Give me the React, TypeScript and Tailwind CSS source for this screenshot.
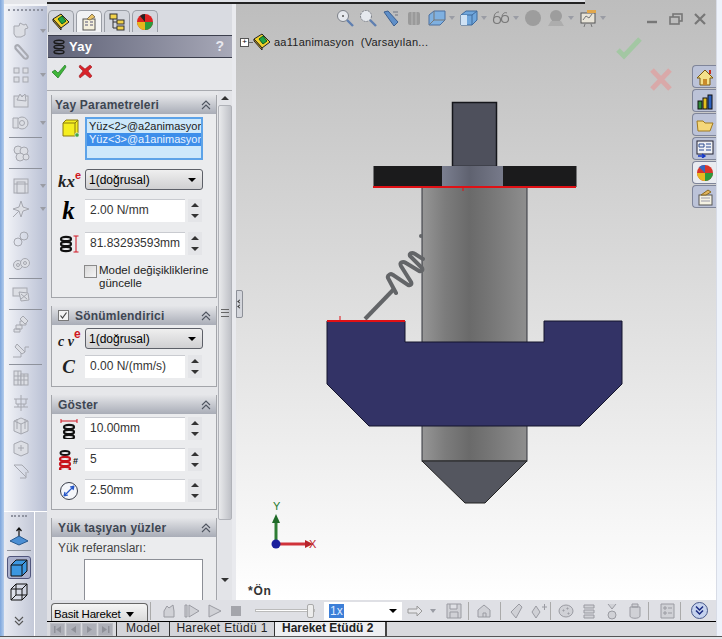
import type { ReactNode } from 'react'

const FONT = "font-['Liberation_Sans',Arial,sans-serif]"

function Ico({ w = 20, h = 20, children }: { w?: number; h?: number; children: ReactNode }) {
  return (
    <svg width={w} height={h} viewBox={`0 0 ${w} ${h}`} className="block shrink-0">
      {children}
    </svg>
  )
}

// Disabled command icons of the left toolbar, all the same washed-out grey
function GreyIcon({ kind }: { kind: number }) {
  const s = { fill: '#dcdee4', stroke: '#a6a8b0', strokeWidth: 1 }
  const shapes: ReactNode[] = [
    <path {...s} d="M3 5h5l1-3 4 2 2-1 2 4-3 1v6l-4 2H5l-2-3z" />,
    <path fill="none" stroke="#a8aab2" strokeWidth="2" d="M4 6l9 10c3 2 5-1 3-3L8 4C6 2 3 4 5 7l8 9" />,
    <g {...s}><rect x="3" y="3" width="5" height="5" /><rect x="12" y="3" width="5" height="5" /><rect x="3" y="12" width="5" height="5" /><rect x="12" y="12" width="5" height="5" /></g>,
    <g {...s}><rect x="3" y="6" width="14" height="11" /><path d="M6 10l3-6 2 3 3-3 1 7z" /></g>,
    <g {...s}><circle cx="11" cy="10" r="6" /><circle cx="11" cy="10" r="2.5" /><path d="M2 5h5v10H2z" /></g>,
    <g {...s}><circle cx="7" cy="7" r="4" /><circle cx="13" cy="8" r="4" /><circle cx="9" cy="14" r="4" /><circle cx="15" cy="14" r="3" /></g>,
    <g {...s}><rect x="3" y="3" width="14" height="14" /><rect x="6" y="6" width="8" height="11" /><path d="M3 8h14" /></g>,
    <g {...s}><path d="M10 2l2 6 6 2-6 2-2 6-2-6-6-2 6-2z" /><path d="M2 18l6-6" /></g>,
    <g {...s} fill="none"><circle cx="7" cy="13" r="4" /><circle cx="13" cy="7" r="4" /><path d="M10 10l-1 1" /></g>,
    <g {...s}><circle cx="7" cy="12" r="4.5" /><circle cx="14" cy="10" r="4.5" /><circle cx="7" cy="12" r="1.5" /><circle cx="14" cy="10" r="1.5" /></g>,
    <g {...s}><rect x="2" y="4" width="14" height="8" /><path d="M8 8l9 1 1 7-8 1z" /><path d="M10 10l6 5M16 10l-6 5" /></g>,
    <g {...s}><path d="M3 15h6v3H3zM5 11h6v4H5zM9 7h6v4H9z" /><path d="M12 2l5 5-3 3-5-5z" /></g>,
    <g {...s}><path d="M2 17h8v-5h4V7h4" fill="none" /><path d="M6 4l8 8-3 2-7-7z" /></g>,
    <g {...s}><rect x="3" y="3" width="7" height="14" /><rect x="10" y="6" width="7" height="11" /><path d="M3 8h14M3 12h14M7 3v14M13 6v11" /></g>,
    <g {...s} fill="none"><path d="M10 2v16M3 6h14M5 6v5h10V6M3 14h14" /><path d="M7 11v3M13 11v3" /></g>,
    <g {...s}><path d="M3 5l7-3 7 3v10l-7 3-7-3z" /><path d="M10 8v10M3 5l7 3 7-3M6 3v10M14 3v10" /></g>,
    <g {...s}><path d="M3 6l7-3 7 3v9l-7 3-7-3z" /><path d="M7 10h6M10 7v6" /></g>,
    <g {...s} fill="none"><path d="M3 4h8l6 6v2M3 4l12 12M15 11v6h-6" /></g>,
  ]
  return <Ico>{shapes[kind]}</Ico>
}

// Tiny triangle shown after a command with a flyout
function Drop() {
  return <span className="block w-0 h-0 border-x-[3.5px] border-x-transparent border-t-[4px] border-t-[#9a9ca4]" />
}

function ToolRow({ kind, drop, cls }: { kind: number; drop?: boolean; cls: string }) {
  return (
    <div className={`flex items-center pl-[7px] gap-[9px] ${cls}`}>
      <GreyIcon kind={kind} />
      {drop && <Drop />}
    </div>
  )
}

function Sep({ cls = '' }: { cls?: string }) {
  return <div className={`h-px bg-[#8e929c] mx-[5px] ${cls}`} />
}

// Dotted grip on top of a toolbar
function Grip({ cls = '' }: { cls?: string }) {
  return <div className={`h-[2px] mx-[4px] border-t-2 border-dotted border-[#8f93a0] ${cls}`} />
}

function CollapseChevrons() {
  return (
    <svg width="12" height="12" viewBox="0 0 12 12" className="block">
      <path d="M2 6l4-4 4 4M2 10l4-4 4 4" fill="none" stroke="#4f5560" strokeWidth="1.1" />
    </svg>
  )
}

function Spinner() {
  return (
    <div className="w-[14px] h-full flex flex-col items-center justify-center gap-[7px] bg-[#e4e5e8]">
      <span className="block w-0 h-0 border-x-[4px] border-x-transparent border-b-[4px] border-b-[#333]" />
      <span className="block w-0 h-0 border-x-[4px] border-x-transparent border-t-[4px] border-t-[#333]" />
    </div>
  )
}

function NumField({ icon, value, cls = '' }: { icon: ReactNode; value: string; cls?: string }) {
  return (
    <div className={`flex h-[23px] ${cls}`}>
      <div className="w-[33px] flex items-center justify-center">{icon}</div>
      <div className="w-[100px] h-[23px] bg-white border-t border-[#c9cbd0] pl-[5px] text-[12px] leading-[21px] text-[#333]">{value}</div>
      <div className="ml-[3px] h-full"><Spinner /></div>
    </div>
  )
}

function Combo({ cls = '' }: { cls?: string }) {
  return (
    <div className={`w-[118px] h-[21px] rounded-[3px] border border-[#5d6068] bg-gradient-to-b from-[#efefef] to-[#d0d0d2] flex items-center justify-between pl-[3px] pr-[6px] text-[12px] text-black ${cls}`}>
      <span>1(doğrusal)</span>
      <span className="block w-0 h-0 border-x-[4px] border-x-transparent border-t-[4px] border-t-black" />
    </div>
  )
}

function Group({ title, check, titleCls = 'pl-[6px]', cls = '', children }: { title: string; check?: boolean; titleCls?: string; cls?: string; children: ReactNode }) {
  return (
    <section className={`shrink-0 border border-[#a3a5aa] border-t-0 bg-[#ebecee] w-[166px] ${cls}`}>
      <div className={`h-[19px] bg-gradient-to-b from-[#e5e6e9] to-[#a9adb7] flex items-center justify-between pr-[4px] ${titleCls}`}>
        <div className="flex items-center">
          {check && (
            <span className="w-[11px] h-[11px] border border-[#777] bg-[#f3f3f3] mr-[6px] flex items-center justify-center">
              <svg width="9" height="9" viewBox="0 0 9 9"><path d="M1.5 4.5l2 2.5 4-5.5" fill="none" stroke="#444" strokeWidth="1.2" /></svg>
            </span>
          )}
          <span className="text-[12px] font-bold text-[#3e4652] tracking-[0.2px]">{title}</span>
        </div>
        <CollapseChevrons />
      </div>
      {children}
    </section>
  )
}

const SpringPlain = ({ red }: { red?: boolean }) => (
  <g fill="none" stroke={red ? '#c8141c' : '#111'} strokeWidth="2.2">
    <ellipse cx="8" cy="4" rx="5" ry="2.2" />
    <ellipse cx="8" cy="9" rx="5" ry="2.2" />
    <ellipse cx="8" cy="14" rx="5" ry="2.2" />
  </g>
)

function ManagerTab({ active, children }: { active?: boolean; children: ReactNode }) {
  return (
    <div className={`w-[26px] h-[22px] rounded-t-[5px] border border-b-0 border-[#9a9ea6] flex items-center justify-center ${active ? 'bg-[#f2f3f5]' : 'bg-[#d4d7de]'}`}>
      {children}
    </div>
  )
}

const PartCube = () => (
  <Ico w={18} h={18}>
    <path d="M1 6l8-5 8 8-8 6z" fill="#f2d02c" stroke="#222" />
    <path d="M6 6l4-3 4 5-4 3z" fill="#1fa345" stroke="#0b5a22" />
    <path d="M1 6l8 9v2L1 8z" fill="#e0b020" stroke="#222" />
  </Ico>
)

function PropertyPanel() {
  return (
    <div className={`w-[185px] h-[600px] shrink-0 bg-[#e6e7ea] flex flex-col overflow-hidden ${FONT}`}>
      <div className="h-[35px] shrink-0 pt-[10px] pl-[1px] flex gap-[2px] bg-[#d9dbe1]">
        <ManagerTab><PartCube /></ManagerTab>
        <ManagerTab active>
          <Ico w={18} h={18}><rect x="3" y="6" width="12" height="11" fill="#f5f0dc" stroke="#555" /><path d="M5 9h3M10 9h3M5 12h3M10 12h3" stroke="#557" /><path d="M7 6l5-5 3 3-5 3z" fill="#e9c46a" stroke="#875" /></Ico>
        </ManagerTab>
        <ManagerTab>
          <Ico w={18} h={18}><rect x="2" y="1" width="7" height="5" fill="#f2d24a" stroke="#333" /><rect x="9" y="7" width="7" height="4" fill="#f2d24a" stroke="#333" /><rect x="9" y="13" width="7" height="4" fill="#f2d24a" stroke="#333" /><path d="M5 6v9h4M5 9h4" fill="none" stroke="#333" /></Ico>
        </ManagerTab>
        <ManagerTab>
          <Ico w={18} h={18}><circle cx="9" cy="9" r="8" fill="#d22" /><path d="M9 9L1 9a8 8 0 0 0 8 8z" fill="#e5b51c" /><path d="M9 9v8a8 8 0 0 0 8-8z" fill="#2c9a3c" /><path d="M9 9L4 3a8 8 0 0 1 5-2z" fill="#222" /></Ico>
        </ManagerTab>
      </div>
      <div className="h-[23px] shrink-0 ml-[1px] border-y border-[#3c3f4d] bg-gradient-to-r from-[#5f6277] to-[#a8a9b8] flex items-center justify-between pl-[4px] pr-[8px]">
        <div className="flex items-center gap-[3px]">
          <Ico w={14} h={18}>
            <g fill="none" stroke="#1a1a1a" strokeWidth="1.4"><ellipse cx="7" cy="4" rx="5" ry="1.8" /><ellipse cx="7" cy="9" rx="5" ry="1.8" /><ellipse cx="7" cy="14" rx="5" ry="1.8" /></g>
          </Ico>
          <span className="text-[13px] font-bold text-white tracking-[0.3px]">Yay</span>
        </div>
        <span className="text-[14px] font-bold text-[#e8e8ee]">?</span>
      </div>
      <div className="h-[33px] shrink-0 flex items-center gap-[11px] pl-[4px] pb-[6px] border-b border-[#a9abb0]">
        <Ico w={16} h={15}><path d="M1 8l3-2 3 3 7-8 1 2-8 11z" fill="#3fb53a" stroke="#1e7a22" strokeWidth="0.7" /></Ico>
        <Ico w={15} h={15}><path d="M2 1l5 4 5-4 2 2-4 4 4 5-2 2-5-4-5 4-1-2 4-5-4-4z" fill="#d8232a" stroke="#8c1016" strokeWidth="0.5" /></Ico>
      </div>
      <div className="flex flex-1 min-h-0 pt-[4px] overflow-hidden">
        <div className="pl-[4px] w-[171px] shrink-0 flex flex-col gap-[8px]">
          <Group title="Yay Parametreleri" titleCls="pl-[3px]" cls="h-[203px]">
            <div className="flex mt-[3px]">
              <div className="w-[33px] pl-[9px] pt-[1px]">
                <Ico w={20} h={20}>
                  <path d="M2 5l3-3h12v13l-3 3H2z" fill="#f5ee20" stroke="#8a7a10" />
                  <path d="M2 5h12v13M14 5l3-3" fill="none" stroke="#8a7a10" />
                  <circle cx="16" cy="17" r="2.2" fill="#45a545" stroke="#fff" strokeWidth="0.6" />
                </Ico>
              </div>
              <div className="w-[118px] h-[43px] border-2 border-[#5da3e8] bg-[#cde8fb] pt-[1px] text-[11px] leading-[13px] overflow-hidden whitespace-nowrap text-[#1c1c1c]">
                <div className="pl-[2px]">Yüz&lt;2&gt;@a2animasyon</div>
                <div className="pl-[2px] bg-[#3d8eea] text-[#e8f2ff]">Yüz&lt;3&gt;@a1animasyon</div>
              </div>
            </div>
            <div className="flex mt-[9px] items-center">
              <div className="w-[33px] pl-[6px] font-['Liberation_Serif',serif] italic font-bold text-[17px] leading-none text-[#222] whitespace-nowrap">
                kx<span className="not-italic text-[11px] text-[#d01520] font-['Liberation_Sans',sans-serif] align-[8px]">e</span>
              </div>
              <Combo />
            </div>
            <NumField cls="mt-[9px]" value="2.00 N/mm" icon={<span className="font-['Liberation_Serif',serif] italic font-bold text-[25px] leading-none text-black">k</span>} />
            <NumField
              cls="mt-[10px]"
              value="81.83293593mm"
              icon={
                <Ico w={22} h={18}>
                  <SpringPlain />
                  <path d="M18 1v16M15.5 1h5M15.5 17h5" stroke="#d01520" fill="none" />
                </Ico>
              }
            />
            <div className="flex mt-[9px] pl-[32px] text-[11.5px] leading-[13px] text-[#222]">
              <span className="w-[13px] h-[13px] border border-[#8a8a8a] bg-gradient-to-br from-[#d8d8d8] to-[#f5f5f5] shrink-0 mt-[1px]" />
              <span className="ml-[2px] w-[115px]">Model değişikliklerine güncelle</span>
            </div>
          </Group>
          <Group title="Sönümlendirici" check cls="h-[81px]">
            <div className="flex mt-[3px] items-center">
              <div className="w-[33px] pl-[6px] font-['Liberation_Serif',serif] italic font-bold text-[14px] leading-none text-[#222] whitespace-nowrap">
                c v<span className="not-italic text-[12px] text-[#d01520] font-['Liberation_Sans',sans-serif] align-[8px]">e</span>
              </div>
              <Combo />
            </div>
            <NumField cls="mt-[6px]" value="0.00 N/(mm/s)" icon={<span className="font-['Liberation_Serif',serif] italic font-bold text-[19px] leading-none text-[#222]">C</span>} />
          </Group>
          <Group title="Göster" cls="h-[115px]">
            <NumField
              cls="mt-[3px]"
              value="10.00mm"
              icon={
                <Ico w={18} h={20}>
                  <path d="M1 2h16M1 0v4M17 0v4" stroke="#d01520" fill="none" />
                  <g transform="translate(1 4)"><SpringPlain /></g>
                </Ico>
              }
            />
            <NumField
              cls="mt-[8px]"
              value="5"
              icon={
                <Ico w={22} h={20}>
                  <ellipse cx="7" cy="3" rx="4.5" ry="2" fill="none" stroke="#111" strokeWidth="2" />
                  <g transform="translate(-1 5)"><SpringPlain red /></g>
                  <text x="15" y="14" fontSize="9" fontWeight="700" fontFamily="Liberation Sans" fill="#111">#</text>
                </Ico>
              }
            />
            <NumField
              cls="mt-[8px]"
              value="2.50mm"
              icon={
                <Ico w={20} h={20}>
                  <circle cx="10" cy="10" r="8.5" fill="#f4f6fa" stroke="#3a3f4a" />
                  <path d="M5 15L15 5M5 15l1-4M5 15l4-1M15 5l-4 1M15 5l-1 4" stroke="#2456c8" fill="none" strokeWidth="1.2" />
                </Ico>
              }
            />
          </Group>
          <Group title="Yük taşıyan yüzler" cls="h-[90px] border-b-0">
            <div className="pl-[6px] mt-[4px] text-[12px] text-[#444] leading-[14px]">Yük referansları:</div>
            <div className="ml-[32px] mt-[4px] w-[119px] h-[44px] bg-white border border-[#8c8f96]" />
          </Group>
        </div>
        <div className="w-[14px] shrink-0 flex flex-col items-center bg-[#e3e4e8] -mt-[4px] pt-[4px]">
          <span className="mt-[1px] block w-0 h-0 border-x-[4px] border-x-transparent border-b-[4px] border-b-[#333]" />
          <div className="mt-[5px] w-[14px] h-[415px] bg-gradient-to-r from-[#e9eaec] to-[#bfc1c7] border border-[#b0b2b8] rounded-[2px] flex items-center justify-center">
            <div className="w-[8px] h-[8px] border-y border-[#666] flex items-center"><div className="w-full h-px bg-[#666]" /></div>
          </div>
          <span className="mt-[58px] block w-0 h-0 border-x-[4px] border-x-transparent border-t-[4px] border-t-[#333]" />
        </div>
      </div>
    </div>
  )
}

function LeftToolbar() {
  return (
    <div className="w-[47px] h-[636px] shrink-0 flex">
      <div className="w-[4px] bg-gradient-to-r from-[#7ea6dc] to-[#b5cdec]" />
      <div className="w-[43px] flex flex-col">
        <div className="h-[507px] shrink-0 bg-gradient-to-r from-[#f3f4f8] to-[#b9c0d4] border-t-2 border-[#f4f5f8] mt-[4px] pt-[3px] flex flex-col overflow-hidden">
          <Grip />
          <ToolRow kind={0} drop cls="h-[24px] mt-[8px]" />
          <ToolRow kind={1} cls="h-[18px]" />
          <ToolRow kind={2} drop cls="h-[28px]" />
          <ToolRow kind={3} cls="h-[22px]" />
          <ToolRow kind={4} drop cls="h-[24px]" />
          <Sep cls="mt-[2px]" />
          <ToolRow kind={5} cls="h-[30px]" />
          <Sep />
          <ToolRow kind={6} drop cls="h-[26px] mt-[4px]" />
          <ToolRow kind={7} drop cls="h-[20px]" />
          <ToolRow kind={8} cls="h-[26px] mt-[7px]" />
          <ToolRow kind={9} cls="h-[22px]" />
          <Sep cls="mt-[4px]" />
          <ToolRow kind={10} cls="h-[30px]" />
          <Sep />
          <ToolRow kind={11} cls="h-[27px]" />
          <ToolRow kind={12} cls="h-[26px]" />
          <Sep cls="mt-[1px]" />
          <ToolRow kind={13} cls="h-[26px]" />
          <ToolRow kind={14} cls="h-[24px]" />
          <ToolRow kind={15} cls="h-[22px]" />
          <ToolRow kind={16} cls="h-[22px]" />
          <ToolRow kind={17} cls="h-[24px]" />
        </div>
        <div className="flex-1 border-t border-white flex">
          <div className="w-[31px] bg-gradient-to-r from-[#e8eaf1] to-[#c4c9d8] border-r border-white flex flex-col items-center pt-[3px]">
            <div className="w-[24px]"><Grip cls="mx-0" /></div>
            <div className="mt-[9px]">
              <Ico w={22} h={22}>
                <path d="M11 2v13M8.500 5L11 2l2.500 3" fill="none" stroke="#111" strokeWidth="1.2" />
                <path d="M2 15l9-5 9 5-9 4z" fill="#4b8fd4" stroke="#27598f" />
              </Ico>
            </div>
            <div className="w-[24px] h-px bg-[#8e929c] mt-[2px]" />
            <div className="w-[24px] h-[23px] mt-[5px] border border-[#50557c] rounded-[3px] bg-[#aab0cc] flex items-center justify-center">
              <Ico w={20} h={20}>
                <path d="M2 7l5-5h11v11l-5 5H2z" fill="#3c97e0" stroke="#111" />
                <path d="M2 7h11v11M13 7l5-5" fill="none" stroke="#111" />
              </Ico>
            </div>
            <div className="mt-[3px]">
              <Ico w={20} h={20}>
                <path d="M2 7l5-5h11v11l-5 5H2zM2 7h11v11M13 7l5-5M7 2v11h11M7 13l-5 5" fill="none" stroke="#111" />
              </Ico>
            </div>
            <svg width="12" height="12" viewBox="0 0 12 12" className="mt-[13px]"><path d="M2 2l4 4 4-4M2 6l4 4 4-4" fill="none" stroke="#555" strokeWidth="1.1" /></svg>
          </div>
          <div className="flex-1 bg-[#ccd0da]" />
        </div>
      </div>
    </div>
  )
}

function HudIcon({ children, drop }: { children: ReactNode; drop?: boolean }) {
  return (
    <div className="flex items-center gap-[3px]">
      {children}
      {drop && <Drop />}
    </div>
  )
}

function HeadsUp() {
  return (
    <div className="absolute left-[100px] top-[9px] flex items-center gap-[5px]">
      <HudIcon><Ico w={18} h={18}><circle cx="7" cy="7" r="5.5" fill="#e6e9ee" stroke="#7c8088" /><circle cx="7" cy="7" r="1" fill="#555" /><path d="M11 11l6 6" stroke="#5f7fb0" strokeWidth="2.4" /></Ico></HudIcon>
      <HudIcon><Ico w={18} h={18}><circle cx="7" cy="7" r="5.5" fill="#e6e9ee" stroke="#7c8088" strokeDasharray="2 1" /><path d="M11 11l6 6" stroke="#5f7fb0" strokeWidth="2.4" /></Ico></HudIcon>
      <HudIcon><Ico w={18} h={18}><path d="M2 3l4-1 10 11-4 4z" fill="#5f8fc8" stroke="#3c5f90" /><path d="M11 3h5M13 6h3" stroke="#8a8f98" strokeWidth="1.3" /></Ico></HudIcon>
      <HudIcon><Ico w={18} h={18}><rect x="3" y="3" width="12" height="13" rx="2" fill="#9a9a9a" /><path d="M7 3v13M11 3v13" stroke="#b8b8b8" /></Ico></HudIcon>
      <HudIcon drop><Ico w={18} h={18}><path d="M1 6l5-4h11v9l-5 5H1z" fill="#7fb0e0" stroke="#4a6f9f" /><path d="M6 2v9h11M6 11l-5 5" fill="none" stroke="#777" /></Ico></HudIcon>
      <HudIcon drop><Ico w={18} h={18}><path d="M1 6l5-4h11v9l-5 5H1z" fill="#6fa6dc" stroke="#3f6a9c" /><path d="M1 6h11v10M12 6l5-4" fill="none" stroke="#3f6a9c" /><path d="M1 6h6v10H1z" fill="#cfe2f5" /></Ico></HudIcon>
      <HudIcon drop><Ico w={18} h={18}><circle cx="5" cy="11" r="3.5" fill="none" stroke="#777" strokeWidth="1.2" /><circle cx="13" cy="10" r="3.5" fill="none" stroke="#777" strokeWidth="1.2" /><path d="M2 9c0-5 3-6 5-6M10 7c1-3 3-4 5-3" fill="none" stroke="#777" /></Ico></HudIcon>
      <HudIcon><Ico w={18} h={18}><circle cx="9" cy="9" r="8" fill="#9d9d9d" /></Ico></HudIcon>
      <HudIcon drop><Ico w={18} h={18}><circle cx="9" cy="7" r="6" fill="#9d9d9d" /><path d="M1 17l3-5h10l3 5z" fill="#adadad" /></Ico></HudIcon>
      <HudIcon drop><Ico w={18} h={18}><rect x="2" y="4" width="14" height="10" fill="#e8e4d8" stroke="#555" /><path d="M4 11l3-4 3 2 3-4" fill="none" stroke="#777" /><path d="M6 15l-1 3M12 15l1 3" stroke="#777" /><path d="M8 1h9v3H8z" fill="#e2a84c" /></Ico></HudIcon>
    </div>
  )
}

function TaskTab({ active, children }: { active?: boolean; children: ReactNode }) {
  return (
    <div className={`w-[24px] h-[23px] rounded-l-[4px] border border-r-0 border-[#7f8599] flex items-center justify-center ${active ? 'bg-[#e9ebf0]' : 'bg-[#bcc3d8]'}`}>
      {children}
    </div>
  )
}

function TaskPane() {
  return (
    <div className="absolute right-0 top-[65px] flex flex-col gap-px">
      <TaskTab><Ico w={18} h={18}><path d="M9 2L1 10h3v7h10v-7h3z" fill="#f4e08a" stroke="#7a5a10" /><rect x="7" y="11" width="4" height="6" fill="#c98b2a" /><rect x="13" y="2" width="2" height="4" fill="#c83020" /></Ico></TaskTab>
      <TaskTab><Ico w={18} h={18}><rect x="2" y="9" width="4" height="8" fill="#2f8a3a" stroke="#111" /><rect x="7" y="6" width="4" height="11" fill="#e5c020" stroke="#111" /><rect x="12" y="3" width="4" height="14" fill="#2e62c0" stroke="#111" /></Ico></TaskTab>
      <TaskTab><Ico w={18} h={18}><path d="M1 5h6l2 2h8l-3 8H2z" fill="#f5d77a" stroke="#a07a20" /></Ico></TaskTab>
      <TaskTab><Ico w={18} h={18}><rect x="1" y="1" width="16" height="13" fill="#eef0f4" stroke="#223" /><path d="M3 4h5v3H3zM10 4h5M10 7h5M10 10h5M3 10h5" stroke="#2a4a90" fill="none" /><path d="M2 16h7M6 14l3 2-3 2" stroke="#1438c8" fill="none" strokeWidth="1.4" /></Ico></TaskTab>
      <TaskTab active><Ico w={18} h={18}><circle cx="9" cy="9" r="8" fill="#d8352a" /><path d="M9 9H1a8 8 0 0 0 8 8z" fill="#e6b820" /><path d="M9 9v8a8 8 0 0 0 8-8z" fill="#2c9a3c" /><path d="M9 9L3 3a8 8 0 0 1 6-2z" fill="#3465c0" /></Ico></TaskTab>
      <TaskTab><Ico w={18} h={18}><rect x="3" y="7" width="13" height="10" fill="#f4f1e2" stroke="#555" /><path d="M5 10h9M5 13h9" stroke="#99a" /><path d="M5 7l7-5 3 2-5 3z" fill="#e2b45c" stroke="#8a6a20" /></Ico></TaskTab>
    </div>
  )
}

// Part geometry, in viewport coordinates (page x minus 236)
function Model() {
  return (
    <svg width="480" height="600" viewBox="0 0 480 600" className="absolute left-0 top-0">
      <defs>
        <linearGradient id="cyl" x1="0" x2="1" y1="0" y2="0">
          <stop offset="0" stopColor="#969696" />
          <stop offset="0.22" stopColor="#7c7c7c" />
          <stop offset="0.45" stopColor="#6a6a6a" />
          <stop offset="0.62" stopColor="#747474" />
          <stop offset="1" stopColor="#8e8e8e" />
        </linearGradient>
        <linearGradient id="collar" x1="0" x2="1" y1="0" y2="0">
          <stop offset="0" stopColor="#7b7f90" />
          <stop offset="0.45" stopColor="#5f6270" />
          <stop offset="1" stopColor="#777a8a" />
        </linearGradient>
      </defs>
      <rect x="186" y="186" width="105" height="275" fill="url(#cyl)" stroke="#33353c" />
      <path d="M186 461h105l-42 42h-20z" fill="#54565f" stroke="#222" />
      <rect x="216.500" y="102.500" width="44" height="64" fill="#4e505c" stroke="#15161b" strokeWidth="1.5" />
      <rect x="137.500" y="166" width="203" height="21" fill="#1b1b1c" />
      <rect x="206" y="166" width="61" height="21" fill="url(#collar)" />
      <path d="M137 187h203" stroke="#e01015" strokeWidth="2" />
      <path d="M227 187v4" stroke="#e01015" />
      <path d="M129 319l29-30" stroke="#636568" strokeWidth="4" />
      <path
        d="M160 293l-8-15c-1-3 3-5 5-3l15 10c3 1 4-1 3-3l-10-16c-2-4 2-5 5-3l13 8c3 1 4-1 3-3l-12-12c-1-3 3-4 5-2l8 5"
        fill="none"
        stroke="#636568"
        strokeWidth="4"
        strokeLinecap="round"
      />
      <circle cx="185" cy="236" r="2" fill="#636568" />
      <path d="M91 321h78v21h139v-21h78v63l-42 42H133l-42-42z" fill="#333366" stroke="#14142c" />
      <path d="M91 321h78" stroke="#e01015" strokeWidth="2" />
      <path d="M104 316v4" stroke="#e01015" />
      <path d="M40 543v-22" stroke="#2e7d34" strokeWidth="3" />
      <path d="M36 523l4-9 4 9z" fill="#1f6a28" />
      <path d="M44 544h27" stroke="#d0333a" strokeWidth="3" />
      <path d="M69 540l8 4-8 4z" fill="#b8242a" />
      <circle cx="40" cy="544" r="4.5" fill="#1a1f9c" />
      <path d="M382 50l6 6 16-17" fill="none" stroke="#a3c7a3" strokeWidth="5" />
      <path d="M416 70l18 19M434 70l-18 19" stroke="#d9a9a9" strokeWidth="5" />
    </svg>
  )
}

function Viewport() {
  return (
    <div className={`relative flex-1 h-[600px] overflow-hidden bg-gradient-to-b from-[#bdbdbd] to-white ${FONT}`}>
      <Model />
      <HeadsUp />
      <div className="absolute right-[9px] top-[12px] flex items-center gap-[9px]">
        <Ico w={14} h={14}><path d="M2 10h10" stroke="#777" strokeWidth="2.4" /></Ico>
        <Ico w={16} h={14}><rect x="5" y="2" width="9" height="7" fill="none" stroke="#777" strokeWidth="1.6" /><rect x="2" y="5" width="9" height="7" fill="#bdbdbd" stroke="#777" strokeWidth="1.6" /></Ico>
        <Ico w={14} h={14}><path d="M2 2l10 10M12 2L2 12" stroke="#777" strokeWidth="2.2" /></Ico>
      </div>
      <div className="absolute left-[4px] top-[33px] flex items-center">
        <span className="w-[9px] h-[9px] border border-[#555] bg-white flex items-center justify-center text-[8px] leading-none text-black">+</span>
        <span className="w-[4px] h-px bg-[#666]" />
        <PartCube />
        <span className="ml-[3px] text-[11px] tracking-[0.25px] text-[#222] whitespace-pre">aa11animasyon  (Varsayılan...</span>
      </div>
      <div className="absolute left-[37px] top-[501px] text-[11px] leading-none text-[#1f7a2c]">Y</div>
      <div className="absolute left-[73px] top-[539px] text-[11px] leading-none text-[#c02028]">X</div>
      <TaskPane />
      <div className="absolute left-[12px] bottom-0 text-[12px] font-bold tracking-[0.8px] text-[#333]">*Ön</div>
    </div>
  )
}

const BarGrey = ({ d }: { d: string }) => (
  <Ico w={18} h={18}><path d={d} fill="#d0d1d6" stroke="#9a9ba2" /></Ico>
)

function BarSep({ cls }: { cls: string }) {
  return <div className={`w-px h-[18px] bg-[#aaa] ${cls}`} />
}

function NavButton({ d }: { d: string }) {
  return (
    <span className="w-[15px] h-[13px] bg-[#aeb0b8] border border-[#bcbec4] flex items-center justify-center">
      <svg width="9" height="9" viewBox="0 0 9 9"><path d={d} fill="#8e9098" /></svg>
    </span>
  )
}

function MotionBar() {
  return (
    <div className={`h-[36px] flex flex-col ${FONT}`}>
      <div className="h-[22px] bg-[#dfe0e5] flex items-center pl-[4px] border-b border-black">
        <div className="w-[97px] h-[18px] mt-[3px] rounded-t-[4px] border border-b-0 border-[#666] bg-gradient-to-b from-[#f5f5f5] to-[#dadada] flex items-end justify-between pl-[2px] pr-[13px] text-[11.5px] leading-[13px] text-black">
          <span className="tracking-[-0.2px] whitespace-nowrap">Basit Hareket</span>
          <span className="mb-[4px] block w-0 h-0 border-x-[4px] border-x-transparent border-t-[5px] border-t-black" />
        </div>
        <BarSep cls="ml-[2px]" />
        <div className="flex items-center gap-[5px] ml-[9px]">
          <BarGrey d="M4 9l3-5 2 2 4-3 1 6v6H4z" />
          <BarGrey d="M2 3h2v12H2zM6 3l10 6-10 6z" />
          <BarGrey d="M3 3l12 6-12 6z" />
          <Ico w={14} h={18}><rect x="2" y="4" width="10" height="10" fill="#a4a5ab" /></Ico>
        </div>
        <div className="w-[60px] h-[3px] ml-[12px] bg-white border border-[#bbb] relative">
          <span className="absolute right-0 -top-[6px] w-[7px] h-[14px] rounded-[2px] bg-[#ededed] border border-[#aaa]" />
        </div>
        <div className="w-[78px] h-[18px] ml-[9px] bg-white flex items-center justify-between pl-[5px] pr-[5px] text-[12px]">
          <span className="bg-[#3d7fd8] text-[#dfeaff] px-[1px] leading-[14px]">1x</span>
          <span className="block w-0 h-0 border-x-[4px] border-x-transparent border-t-[4px] border-t-black" />
        </div>
        <div className="flex items-center ml-[5px]">
          <Ico w={16} h={14}><path d="M1 5h9V2l5 5-5 5V9H1z" fill="#e5e5e8" stroke="#999" /></Ico>
          <span className="ml-[7px]"><Drop /></span>
          <span className="ml-[9px]"><BarGrey d="M2 2h14v14H2zM5 2v5h7V2M5 16v-6h8v6" /></span>
        </div>
        <BarSep cls="ml-[5px]" />
        <div className="ml-[6px]"><BarGrey d="M3 15V8l6-5 6 5v7zM8 15v-4h3v4" /></div>
        <BarSep cls="ml-[7px]" />
        <div className="flex gap-[4px] ml-[7px]">
          <BarGrey d="M3 10l8-8 3 3-6 11z" />
          <BarGrey d="M2 10l4-6 4 6-4 6zM12 5h5M14.500 2v6" />
        </div>
        <BarSep cls="ml-[2px]" />
        <div className="flex gap-[5px] ml-[6px]">
          <BarGrey d="M2 9a7 6 0 1 0 14 0a7 6 0 1 0-14 0M6 8h1v1H6zM10 6h1v1h-1zM11 11h1v1h-1z" />
          <BarGrey d="M4 3h10v3H4zM4 8h10v3H4zM4 13h10v3H4z" />
          <BarGrey d="M5 2l4 5 4-5M5 13a4 4 0 1 0 8 0a4 4 0 1 0-8 0" />
          <BarGrey d="M4 5h10v9c0 3-10 3-10 0zM6 2h6v3H6z" />
        </div>
        <BarSep cls="ml-[4px]" />
        <div className="ml-[9px]"><BarGrey d="M3 2h13v14H3zM6 5h2v2H6zM6 10h2v2H6zM10 6h4M10 11h4" /></div>
        <BarSep cls="ml-[4px]" />
        <div className="ml-[10px] w-[17px] h-[17px] rounded-full bg-[#c6d3ee] border border-[#4a5a8a] flex items-center justify-center">
          <svg width="11" height="11" viewBox="0 0 11 11"><path d="M2 1.500l3.500 3.500L9 1.500M2 5.500L5.500 9 9 5.500" fill="none" stroke="#1a2a80" strokeWidth="1.5" /></svg>
        </div>
      </div>
      <div className="h-[14px] bg-[#d9dade] flex text-[12px] leading-[13px]">
        <div className="w-[69px] pl-[3px] flex gap-px pt-px">
          <NavButton d="M1 1h1.500v7H1zM8 1v7L3 4.500z" />
          <NavButton d="M7 1v7L2 4.500z" />
          <NavButton d="M2 1v7l5-3.500z" />
          <NavButton d="M7 1h1.500v7H7zM1 1v7l5-3.500z" />
        </div>
        <div className="w-[54px] border-l border-r border-[#333] bg-[#d4d5da] text-center tracking-[0.3px] text-[#222]">Model</div>
        <div className="w-[105px] border-r border-[#333] bg-[#d4d5da] text-center tracking-[0.3px] text-[#222]">Hareket Etüdü 1</div>
        <div className="w-[112px] border-r-2 border-[#444] bg-[#eeeff2] pl-[7px] font-bold text-[#222]">Hareket Etüdü 2</div>
      </div>
    </div>
  )
}

export default function App() {
  return (
    <div className="w-[722px] h-[639px] overflow-hidden bg-[#e4e5e9] flex flex-col relative">
      <div className="flex h-[636px] border-b border-[#555] box-content">
        <LeftToolbar />
        <div className="w-[669px] flex flex-col">
          <div className="flex h-[600px]">
            <PropertyPanel />
            <div className="w-[4px] h-[600px] bg-[#e9eaee] relative">
              <div className="absolute left-[4px] top-[290px] w-[7px] h-[28px] bg-[#d4d6dc] border border-[#8d9098] rounded-r-[2px] z-10 flex flex-col items-center justify-center gap-[2px]">
                <span className="w-[3px] h-[3px] border-l border-b border-[#333] rotate-45" />
                <span className="w-[3px] h-[3px] border-l border-b border-[#333] rotate-45" />
              </div>
            </div>
            <Viewport />
          </div>
          <MotionBar />
        </div>
        <div className="w-[6px] h-[636px] bg-[#eef3fb] border-l border-[#d8dce6]" />
      </div>
      <div className="absolute left-[47px] top-0 w-[538px] h-[4px] bg-[#dfe1e6] border-b-2 border-[#222]" />
    </div>
  )
}
